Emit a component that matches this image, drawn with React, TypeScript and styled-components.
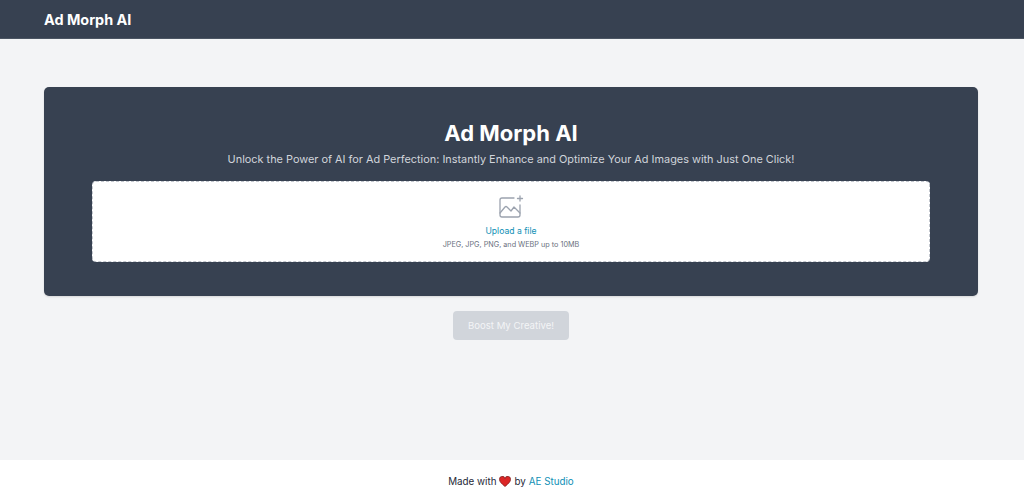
import React from "react";
import styled, { createGlobalStyle } from "styled-components";

const Global = createGlobalStyle`
  html, body { margin: 0; padding: 0; height: 100%; }
  body { font-family: Inter, "Liberation Sans", sans-serif; background: #f3f4f6; }
`;
const Page = styled.div`display:flex;flex-direction:column;height:501px;overflow:hidden;`;
const Header = styled.header`height:39px;flex:none;background:#374151;display:flex;align-items:center;padding:1px 44px 0;box-sizing:border-box;border-bottom:1px solid #4b5563;`;
const Brand = styled.div`color:#fff;font-size:14.4px;font-weight:700;line-height:20px;`;
const Main = styled.main`flex:1;padding:48px 46px 0 44px;display:flex;flex-direction:column;align-items:center;`;
const Hero = styled.section`width:100%;height:209px;flex:none;box-sizing:border-box;background:#374151;border-radius:5px;padding:32px 48px 0;display:flex;flex-direction:column;align-items:center;box-shadow:0 1px 2px rgba(0,0,0,.12);`;
const Title = styled.h1`margin:0;color:#fff;font-size:22px;line-height:28px;font-weight:700;`;
const Sub = styled.p`margin:4px 0 14px;color:#d1d5db;font-size:10.9px;line-height:16px;`;
const Drop = styled.div`width:100%;height:81px;flex:none;box-sizing:border-box;background:#fff;border:1px dashed #c3c7ce;border-radius:4px;display:flex;flex-direction:column;align-items:center;padding-top:13px;`;
const Upload = styled.span`color:#0e8fb5;font-size:8.6px;line-height:14px;font-weight:400;margin-top:6px;`;
const Hint = styled.span`color:#6b7280;font-size:7.25px;line-height:12px;margin-top:1px;`;
const Boost = styled.button`margin-top:15px;width:116px;height:29px;flex:none;border:0;border-radius:4px;background:#d1d5db;color:#f3f4f6;font:400 9.6px/14px Inter,sans-serif;`;
const Footer = styled.footer`height:41px;flex:none;background:#fff;display:flex;align-items:center;justify-content:center;gap:3px;padding:1px 2px 0 0;box-sizing:border-box;color:#1f2937;font-size:9.8px;`;
const Link = styled.span`color:#0e8fb5;`;

export default function App(){return <><Global/><Page>
<Header><Brand>Ad Morph AI</Brand></Header>
<Main><Hero><Title>Ad Morph AI</Title><Sub>Unlock the Power of AI for Ad Perfection: Instantly Enhance and Optimize Your Ad Images with Just One Click!</Sub>
<Drop><svg width="25" height="23" viewBox="0 0 25 23" fill="none" stroke="#9ca3af" strokeWidth="1.3" strokeLinecap="round" strokeLinejoin="round"><path d="M15 3H3a2 2 0 0 0-2 2v15a2 2 0 0 0 2 2h16a2 2 0 0 0 2-2V10"/><path d="M1 18l5-6q1-1 2 0l4 4 3-4 6 6"/><path d="M21 1v5M18.500 3.500h5"/></svg><Upload>Upload a file</Upload><Hint>JPEG, JPG, PNG, and WEBP up to 10MB</Hint></Drop></Hero>
<Boost>Boost My Creative!</Boost></Main>
<Footer>Made with <svg width="12" height="11" viewBox="0 0 24 22"><path fill="#dc2626" stroke="#7f1d1d" strokeWidth="1.5" d="M12 21C5 15 1 11.500 1 7a5.500 5.500 0 0 1 11-1.500A5.500 5.500 0 0 1 23 7c0 4.500-4 8-11 14z"/></svg> by <Link>AE Studio</Link></Footer>
</Page></>}
